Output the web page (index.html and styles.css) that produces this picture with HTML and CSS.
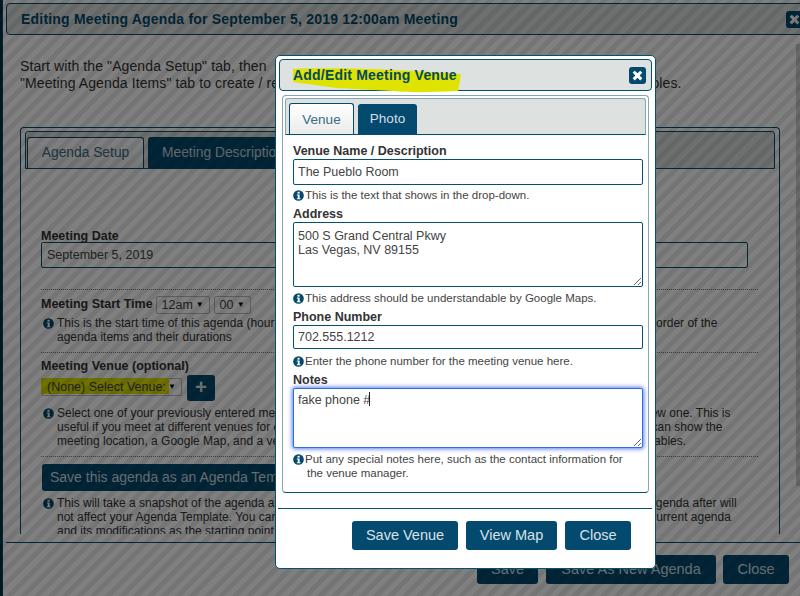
FILE: index.html
```html
<!DOCTYPE html>
<html lang="en">
<head>
<meta charset="utf-8">
<title>Editing Meeting Agenda</title>
<link rel="stylesheet" href="styles.css">
</head>
<body>
<svg class="defs" width="0" height="0" aria-hidden="true">
  <symbol id="info" viewBox="0 0 12 12">
    <circle cx="6" cy="6" r="5.8" fill="#034a6e"/>
    <rect x="4.9" y="2" width="2.3" height="2" fill="#fff"/>
    <path d="M4.2 5h3v3.9h1v1.1H4.2V8.9h1V6.1h-1z" fill="#fff"/>
  </symbol>
  <symbol id="close" viewBox="0 0 12 12">
    <path d="M1.5 3.5 3.5 1.500 6 4 8.500 1.500 10.500 3.500 8 6 10.500 8.500 8.500 10.500 6 8 3.500 10.500 1.500 8.500 4 6z" fill="#fff"/>
  </symbol>
</svg>

<div class="window">
  <header class="win-title">
    <h1>Editing Meeting Agenda for September 5, 2019 12:00am Meeting</h1>
    <span class="icon-btn"><svg width="13" height="13"><use href="#close"/></svg></span>
  </header>
  <div class="win-body">
    <p class="intro">Start with the "Agenda Setup" tab, then&nbsp; continue on to the next tabs and finish with the<br>"Meeting Agenda Items" tab to create / review your agenda items, speakers, presenters, times, and roles.</p>
    <section class="tabs-box">
      <nav class="tabbar">
        <span class="tab active">Agenda Setup</span>
        <span class="tab">Meeting Description</span>
      </nav>
      <div class="setup">
        <label class="lbl first">Meeting Date</label>
        <input class="field date" type="text" value="September 5, 2019">
        <hr class="dots">
        <div class="time-row">
          <label class="lbl">Meeting Start Time</label>
          <span class="pick w54">12am<i>▼</i></span>
          <span class="pick w37">00<i>▼</i></span>
        </div>
        <div class="note"><svg width="11" height="11"><use href="#info"/></svg><p>This is the start time of this agenda (hour and minutes). The agenda's ending time is calculated by the start time, order of the<br>agenda items and their durations</p></div>
        <hr class="dots">
        <label class="lbl">Meeting Venue (optional)</label>
        <div class="venue-row">
          <span class="pick venue"><b class="mark"></b><em>(None) Select Venue:</em><i>▼</i></span>
          <span class="plus">+</span>
        </div>
        <div class="note"><svg width="11" height="11"><use href="#info"/></svg><p>Select one of your previously entered meeting venues from the drop-down list above, or click the plus to add a new one. This is<br>useful if you meet at different venues for each meeting. The agenda and the meeting web page for your agenda can show the<br>meeting location, a Google Map, and a venue photo when you include these along with the agenda template variables.</p></div>
        <hr class="dots">
        <span class="wide-btn">Save this agenda as an Agenda Template</span>
        <div class="note"><svg width="11" height="11"><use href="#info"/></svg><p>This will take a snapshot of the agenda as an Agenda Template you can re-use later. Any changes made to this agenda after will<br>not affect your Agenda Template. You can also use "Save As New Agenda" button to make a copy that uses the current agenda<br>and its modifications as the starting point for a new agenda.</p></div>
      </div>
    </section>
  </div>
  <footer class="win-foot">
    <span class="btn b-save">Save</span>
    <span class="btn b-new">Save As New Agenda</span>
    <span class="btn b-close">Close</span>
  </footer>
  <div class="scrollbar"></div>
</div>

<div class="overlay"></div>

<div class="modal">
  <header class="m-title">
    <svg class="scribble" width="172" height="30" viewBox="0 0 172 30" aria-hidden="true"><path d="M1 4C50 2 110 5 169 9L166 26C140 27 120 28 101 26L45 23 1 17z" fill="#dfe300"/></svg>
    <h2>Add/Edit Meeting Venue</h2>
    <span class="icon-btn"><svg width="13" height="13"><use href="#close"/></svg></span>
  </header>
  <section class="panel">
    <nav class="m-tabbar">
      <span class="m-tab active">Venue</span>
      <span class="m-tab">Photo</span>
    </nav>
    <form class="venue-form">
      <label class="m-lbl l1">Venue Name / Description</label>
      <input class="m-field h26" type="text" value="The Pueblo Room">
      <p class="hint h1"><svg width="11" height="11"><use href="#info"/></svg>This is the text that shows in the drop-down.</p>
      <label class="m-lbl l2">Address</label>
      <textarea class="m-field ta1">500 S Grand Central Pkwy
Las Vegas, NV 89155</textarea>
      <p class="hint h2"><svg width="11" height="11"><use href="#info"/></svg>This address should be understandable by Google Maps.</p>
      <label class="m-lbl l2">Phone Number</label>
      <input class="m-field h24" type="text" value="702.555.1212">
      <p class="hint h3"><svg width="11" height="11"><use href="#info"/></svg>Enter the phone number for the meeting venue here.</p>
      <label class="m-lbl l2">Notes</label>
      <div class="notes-wrap">
        <textarea class="m-field ta2">fake phone #</textarea>
        <span class="caret"></span>
      </div>
      <p class="hint h4"><svg width="11" height="11"><use href="#info"/></svg>Put any special notes here, such as the contact information for the venue manager.</p>
    </form>
  </section>
  <hr class="m-rule">
  <footer class="m-foot">
    <span class="btn m-b1">Save Venue</span>
    <span class="btn m-b2">View Map</span>
    <span class="btn m-b3">Close</span>
  </footer>
</div>
</body>
</html>
```

FILE: styles.css
```css
* { box-sizing: border-box; }
html, body { margin: 0; width: 800px; height: 596px; overflow: hidden; background: #fff; }
body { position: relative; font-family: "Liberation Sans", Arial, sans-serif; color: #333; }
.defs { position: absolute; }

/* background window */
.window {
  position: absolute; left: 2px; top: -8px; width: 810px; height: 620px;
  background: #fff; border: 1px solid #04486a; border-radius: 5px;
  padding: 10px 0 0 3px; display: flex; flex-direction: column;
  box-shadow: -2px 0 0 #02304a;
}
.win-title {
  height: 32px; display: flex; align-items: center; justify-content: space-between;
  background: #dde1e0; border: 1px solid #04506f; border-radius: 4px;
  padding: 0 7px 0 14px; flex: none;
}
.win-title h1 { margin: 0; font-size: 14px; font-weight: bold; color: #034a6e; letter-spacing: .2px; white-space: nowrap; }
.icon-btn {
  width: 17px; height: 17px; background: #034a6e; border-radius: 3px;
  display: flex; align-items: center; justify-content: center; flex: none;
}
.win-body { flex: none; height: 507px; padding: 23px 0 0 14px; overflow: hidden; }
.intro { margin: 0; font-size: 14px; letter-spacing: .1px; line-height: 17px; color: #333; white-space: nowrap; }
.tabs-box {
  margin-top: 35px; width: 760px; height: 407px; overflow: hidden;
  border: 1px solid #04506f; border-bottom: 0; border-radius: 4px 4px 0 0; padding: 3px 4px 0;
}
.tabbar {
  height: 38px; background: #dde1e0; border: 1px solid #04506f; border-radius: 3px 3px 0 0;
  display: flex; align-items: flex-end; gap: 4px; padding-left: 1px;
}
.tab {
  height: 31px; padding: 0 14px; background: #034a6e; color: #c9d6dd;
  font-size: 13.8px; line-height: 31px; border-radius: 3px 3px 0 0; white-space: nowrap;
}
.tab.active { width: 117px; padding: 0; text-align: center; background: linear-gradient(#fff, #eef0ef); color: #3c6c88; border: 1px solid #034a6e; border-bottom: 0; line-height: 29px; }
.setup { padding: 60px 0 0 16px; width: 735px; font-size: 12px; }
.lbl { display: block; font-size: 12.5px; font-weight: bold; line-height: 14px; color: #333; white-space: nowrap; }
.field { display: block; width: 707px; height: 26px; margin-top: -1px; border: 1px solid #04506f; border-radius: 2px; padding: 0 5px; font: 12.5px "Liberation Sans", Arial, sans-serif; color: #444; background: #fff; }
.dots { height: 0; border: 0; border-top: 1px dotted #777; margin: 21px 0 0; width: 717px; }
.time-row { display: flex; align-items: center; gap: 3px; margin-top: 6px; height: 18px; }
.time-row .lbl { margin-top: -2px; }
.pick {
  display: flex; align-items: center; justify-content: space-between; height: 18px;
  border: 1px solid #bbb; border-radius: 2px; padding: 0 5px; font-size: 12.5px; color: #444; background: #fff; position: relative;
}
.pick i { font-style: normal; font-size: 8px; color: #000; margin-top: -2px; }
.pick em { font-style: normal; position: relative; }
.w54 { width: 54px; }
.w37 { width: 37px; margin-left: 1px; }
.note { display: flex; gap: 3px; margin: 2px 0 0 2px; font-size: 12px; line-height: 14px; color: #333; white-space: nowrap; height: 28px; }
.note svg { flex: none; margin-top: 2px; }
.note p { margin: 0; }
.venue-row { display: flex; align-items: center; gap: 5px; height: 26px; margin-top: 2px; }
.venue { width: 141px; padding-left: 5px; margin-top: -2px; }
.mark { position: absolute; left: -1px; top: -1px; width: 128px; height: 16px; background: #dfe300; border-radius: 1px; }
.plus { width: 28px; height: 26px; background: #034a6e; color: #dfe7ec; border-radius: 3px; font-size: 20px; font-weight: bold; line-height: 24px; text-align: center; }
.dots + .lbl { margin-top: 6px; }
.note + .dots { margin-top: 8px; }
.venue-row + .note { height: 42px; margin-top: 5px; }
.wide-btn { display: block; width: 290px; height: 27px; margin: 7px 0 0 1px; background: #034a6e; color: #d3dfe6; border-radius: 3px; font-size: 14px; line-height: 27px; padding-left: 8px; white-space: nowrap; }
.wide-btn + .note { height: 42px; margin-top: 5px; }
.win-foot { flex: none; height: 60px; border-top: 1px solid #04506f; display: flex; align-items: flex-start; padding: 12px 0 0 471px; gap: 8px; }
.btn { display: block; height: 29px; background: #034a6e; color: #d8e2e8; border-radius: 3px; font-size: 14.5px; line-height: 29px; text-align: center; white-space: nowrap; }
.b-save { width: 61px; }
.b-new { width: 170px; }
.b-close { width: 66px; margin-left: -1px; }
.scrollbar { position: absolute; left: 793px; top: 51px; width: 6px; height: 442px; background: #d0d0d0; }

/* dim layer */
.overlay {
  position: absolute; inset: 0;
  background: repeating-linear-gradient(135deg, rgba(0,0,0,.5) 0 5px, rgba(0,0,0,.54) 5px 10px);
}

/* modal */
.modal {
  position: absolute; left: 275px; top: 55px; width: 381px; height: 514px;
  background: #fff; border: 1px solid #04506f; border-radius: 5px; padding: 3px;
}
.m-title {
  position: relative; height: 32px; background: #dde1e0; border: 1px solid #04506f; border-radius: 4px;
  display: flex; align-items: center; justify-content: space-between; padding: 0 5px 0 13px;
}
.m-title h2 { position: relative; margin: 0; font-size: 14px; font-weight: bold; color: #034a5e; letter-spacing: .2px; white-space: nowrap; }
.scribble { position: absolute; left: 12px; top: 5px; }
.panel {
  margin: 4px 3px 0; width: 367px; height: 398px;
  border: 1.5px solid #85a5b7; border-bottom-color: #04506f; border-radius: 4px; padding: 2px;
}
.m-tabbar {
  height: 37px; background: #dde1e0; border: 1px solid #85a5b7; border-bottom-color: #04506f; border-radius: 3px 3px 0 0;
  display: flex; align-items: flex-end; gap: 4px; padding-left: 3px;
}
.m-tab { width: 59px; height: 30px; background: #034a6e; color: #d3dfe6; font-size: 13.5px; line-height: 30px; text-align: center; border-radius: 3px 3px 0 0; }
.m-tab.active { width: 65px; height: 31px; background: linear-gradient(#fff, #e9eceb); color: #3c6c88; border: 1px solid #034a6e; border-bottom: 0; line-height: 31px; }
.venue-form { padding: 9px 0 0 8px; }
.m-lbl { display: block; font-size: 12.5px; font-weight: bold; line-height: 14px; color: #333; white-space: nowrap; }
.l2 { margin-top: 5px; }
.m-field {
  display: block; width: 350px; margin-top: 1px; border: 1px solid #04506f; border-radius: 2px; padding: 0 4px;
  font: 12.5px/14px "Liberation Sans", Arial, sans-serif; color: #444; background: #fff; outline: 0;
}
.h26 { height: 26px; }
.h24 { height: 24px; }
.ta1 { height: 65px; padding-top: 6px; }
.notes-wrap { position: relative; margin-top: 1px; }
.ta2 { height: 60px; margin-top: 0; padding-top: 4px; border-color: #2a6fe0; box-shadow: 0 0 4px 1px #5b7cf0; }
.caret { position: absolute; left: 76px; top: 4px; width: 1px; height: 14px; background: #222; }
.hint { margin: 3px 0 0; padding-left: 14px; font-size: 11.5px; line-height: 14px; color: #444; }
.hint svg { margin-left: -14px; margin-right: 1px; vertical-align: -2px; }
.h2 { margin-top: 4px; }
.h3 { margin-top: 5px; }
.h4 { margin-top: 5px; line-height: 13.5px; padding-right: 15px; }
.m-rule { height: 0; border: 0; border-top: 1px solid #04506f; margin: 15px 0 0 -1px; width: 374px; }
.m-foot { display: flex; gap: 8px; padding: 12px 0 0 73px; }
.m-b1 { width: 106px; }
.m-b2 { width: 91px; }
.m-b3 { width: 66px; }
```
